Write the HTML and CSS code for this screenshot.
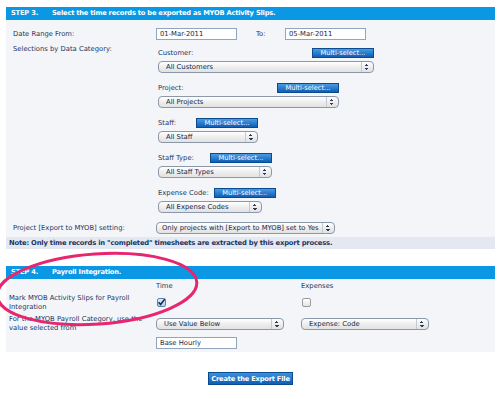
FILE: index.html
```html
<!DOCTYPE html>
<html lang="en">
<head>
    <meta charset="UTF-8">
    <title>MYOB Export</title>
    <link rel="stylesheet" href="styles.css">
</head>
<body>
    <section class="panel">
        <h2 class="step-head"><span class="step-no">STEP 3.</span>Select the time records to be exported as MYOB Activity Slips.</h2>
        <div class="form-grid">
            <div class="label date-label">Date Range From:</div>
            <div class="field date-range">
                <input class="text-input" type="text" value="01-Mar-2011">
                <span class="to-label">To:</span>
                <input class="text-input" type="text" value="05-Mar-2011">
            </div>

            <div class="label cat-label">Selections by Data Category:</div>
            <div class="field categories">
                <div class="cat">
                    <div class="cat-head"><span>Customer:</span><button class="multi-btn" type="button">Multi-select...</button></div>
                    <div class="select sel-customer"><span>All Customers</span><i class="arrows"></i></div>
                </div>
                <div class="cat">
                    <div class="cat-head"><span>Project:</span><button class="multi-btn" type="button">Multi-select...</button></div>
                    <div class="select sel-project"><span>All Projects</span><i class="arrows"></i></div>
                </div>
                <div class="cat">
                    <div class="cat-head"><span>Staff:</span><button class="multi-btn" type="button">Multi-select...</button></div>
                    <div class="select sel-staff"><span>All Staff</span><i class="arrows"></i></div>
                </div>
                <div class="cat">
                    <div class="cat-head"><span>Staff Type:</span><button class="multi-btn" type="button">Multi-select...</button></div>
                    <div class="select sel-stafftype"><span>All Staff Types</span><i class="arrows"></i></div>
                </div>
                <div class="cat">
                    <div class="cat-head"><span>Expense Code:</span><button class="multi-btn" type="button">Multi-select...</button></div>
                    <div class="select sel-expense"><span>All Expense Codes</span><i class="arrows"></i></div>
                </div>
            </div>

            <div class="label setting-label">Project [Export to MYOB] setting:</div>
            <div class="field setting-field">
                <div class="select sel-setting"><span>Only projects with [Export to MYOB] set to Yes</span><i class="arrows"></i></div>
            </div>
        </div>
        <div class="note">Note: Only time records in "completed" timesheets are extracted by this export process.</div>
    </section>

    <section class="panel panel-payroll">
        <h2 class="step-head"><span class="step-no">STEP 4.</span>Payroll Integration.</h2>
        <div class="payroll-grid">
            <div></div>
            <div class="col-head">Time</div>
            <div class="col-head">Expenses</div>

            <div class="label">Mark MYOB Activity Slips for Payroll Integration</div>
            <div class="field"><span class="check checked"></span></div>
            <div class="field"><span class="check"></span></div>

            <div class="label">For the MYOB Payroll Category, use the value selected from</div>
            <div class="field"><div class="select sel-payroll"><span>Use Value Below</span><i class="arrows"></i></div></div>
            <div class="field"><div class="select sel-payroll"><span>Expense: Code</span><i class="arrows"></i></div></div>

            <div></div>
            <div class="field base-field"><input class="text-input" type="text" value="Base Hourly"></div>
            <div></div>
        </div>
    </section>

    <div class="actions">
        <button class="create-btn" type="button">Create the Export File</button>
    </div>

    <svg class="highlight" width="500" height="399" viewBox="0 0 500 399">
        <ellipse cx="97" cy="289" rx="100" ry="35" transform="rotate(-4 97 289)" fill="none" stroke="#e8266e" stroke-width="3"/>
    </svg>
</body>
</html>
```

FILE: styles.css
```css
:root {
    --head-blue: #0a98e5;
    --panel-bg: #f3f5f9;
    --note-bg: #e4e9f1;
    --text-color: #1a3563;
    --input-border: #8fa5c0;
    --btn-bottom: #0e5fb5;
    --btn-border: #0a4a8e;
}

body {
    margin: 0;
    padding: 7px 5px 0 6px;
    background-color: #ffffff;
    font-family: "DejaVu Sans", Verdana, sans-serif;
    font-size: 6.8px;
    line-height: 9px;
    color: var(--text-color);
}

.panel {
    background-color: var(--panel-bg);
}

.panel-payroll {
    margin-top: 17px;
    padding-bottom: 3px;
}

.step-head {
    margin: 0;
    height: 13px;
    padding-left: 5px;
    background-color: var(--head-blue);
    color: #ffffff;
    font-size: 6.7px;
    font-weight: bold;
    line-height: 13px;
    letter-spacing: -0.2px;
}

.step-no {
    display: inline-block;
    width: 41px;
}

.form-grid {
    display: grid;
    grid-template-columns: 143px 1fr;
    padding: 8px 0 0 7px;
}

.label {
    align-self: center;
}

.cat-label {
    align-self: start;
    margin-top: 5px;
}

.date-range {
    display: flex;
    align-items: center;
}

.text-input {
    box-sizing: border-box;
    width: 81px;
    height: 12px;
    margin: 0;
    padding: 0 3px;
    border: 1px solid var(--input-border);
    background-color: #ffffff;
    font-family: inherit;
    font-size: 6.8px;
    color: #1a2a44;
}

.to-label {
    display: inline-block;
    width: 29px;
    margin-left: 19px;
}

.categories {
    display: flex;
    flex-direction: column;
    align-items: flex-start;
    margin-top: 8px;
    padding-left: 2px;
}

.cat {
    display: inline-flex;
    flex-direction: column;
    align-items: flex-start;
    margin-bottom: 10px;
}

.cat:last-child {
    margin-bottom: 0;
}

.cat-head {
    display: flex;
    align-self: stretch;
    justify-content: space-between;
    align-items: center;
    gap: 5px;
    height: 10px;
    margin-bottom: 3px;
}

.multi-btn {
    box-sizing: border-box;
    width: 62px;
    height: 10px;
    padding: 0;
    border: 1px solid var(--btn-border);
    background: linear-gradient(#4a9be3, var(--btn-bottom));
    color: #ffffff;
    font-family: inherit;
    font-size: 6.7px;
    line-height: 8px;
    cursor: pointer;
}

.select {
    box-sizing: border-box;
    display: flex;
    align-items: center;
    height: 12px;
    padding-left: 7px;
    border: 1px solid #8c98a8;
    border-radius: 4px;
    background: linear-gradient(#ffffff, #ebebeb 60%, #e2e2e2);
    color: #142848;
    white-space: nowrap;
}

.select span {
    flex: 1;
    overflow: hidden;
}

.arrows {
    align-self: stretch;
    width: 11px;
    border-left: 1px solid #c4cad2;
    background:
        linear-gradient(135deg, transparent 50%, #2d3e5c 50%) no-repeat,
        linear-gradient(-135deg, transparent 50%, #2d3e5c 50%) no-repeat,
        linear-gradient(45deg, transparent 50%, #2d3e5c 50%) no-repeat,
        linear-gradient(-45deg, transparent 50%, #2d3e5c 50%) no-repeat;
    background-size: 2px 2px;
    background-position: 3px 2px, 5px 2px, 3px 6px, 5px 6px;
}

.sel-customer { width: 216px; }
.sel-project { width: 181px; }
.sel-staff { width: 100px; }
.sel-stafftype { width: 114px; }
.sel-expense { width: 104px; }
.sel-setting { width: 179px; padding-left: 5px; }
.sel-payroll { width: 128px; }

.setting-field {
    margin-top: 9px;
}

.setting-label {
    margin-top: 9px;
}

.note {
    height: 12px;
    margin-top: 3px;
    padding-left: 3px;
    background-color: var(--note-bg);
    font-weight: bold;
    line-height: 12px;
    letter-spacing: -0.2px;
}

.payroll-grid {
    display: grid;
    grid-template-columns: 147px 145px 1fr;
    padding: 2px 0 0 3px;
    row-gap: 3px;
}

.payroll-grid .label {
    padding-right: 6px;
}

.col-head {
    line-height: 10px;
}

.field {
    align-self: center;
}

.check {
    display: inline-block;
    box-sizing: border-box;
    width: 9px;
    height: 9px;
    margin-left: 1px;
    border: 1px solid #9a9a9a;
    border-radius: 2px;
    background: linear-gradient(#ffffff, #e4e4e4);
    vertical-align: middle;
}

.check.checked {
    border-color: #5f7fae;
    background:
        url("data:image/svg+xml,%3Csvg xmlns='http://www.w3.org/2000/svg' viewBox='0 0 9 9'%3E%3Cpath d='M1.5 4.2 L3.6 6.6 L8.2 0.6' fill='none' stroke='%23112a55' stroke-width='1.6'/%3E%3C/svg%3E") no-repeat center / 9px 9px,
        linear-gradient(#dfe9f6, #b9cde6);
}

.base-field {
    margin-top: 1px;
}

.actions {
    display: flex;
    justify-content: center;
    margin-top: 20px;
}

.create-btn {
    box-sizing: border-box;
    width: 85px;
    height: 13px;
    padding: 0;
    border: 1px solid var(--btn-border);
    background: linear-gradient(#3d90dc, var(--btn-bottom));
    color: #ffffff;
    font-family: inherit;
    font-size: 6.7px;
    font-weight: bold;
    line-height: 10px;
    letter-spacing: -0.2px;
    cursor: pointer;
}

.highlight {
    position: absolute;
    left: 0;
    top: 0;
    pointer-events: none;
}
```
